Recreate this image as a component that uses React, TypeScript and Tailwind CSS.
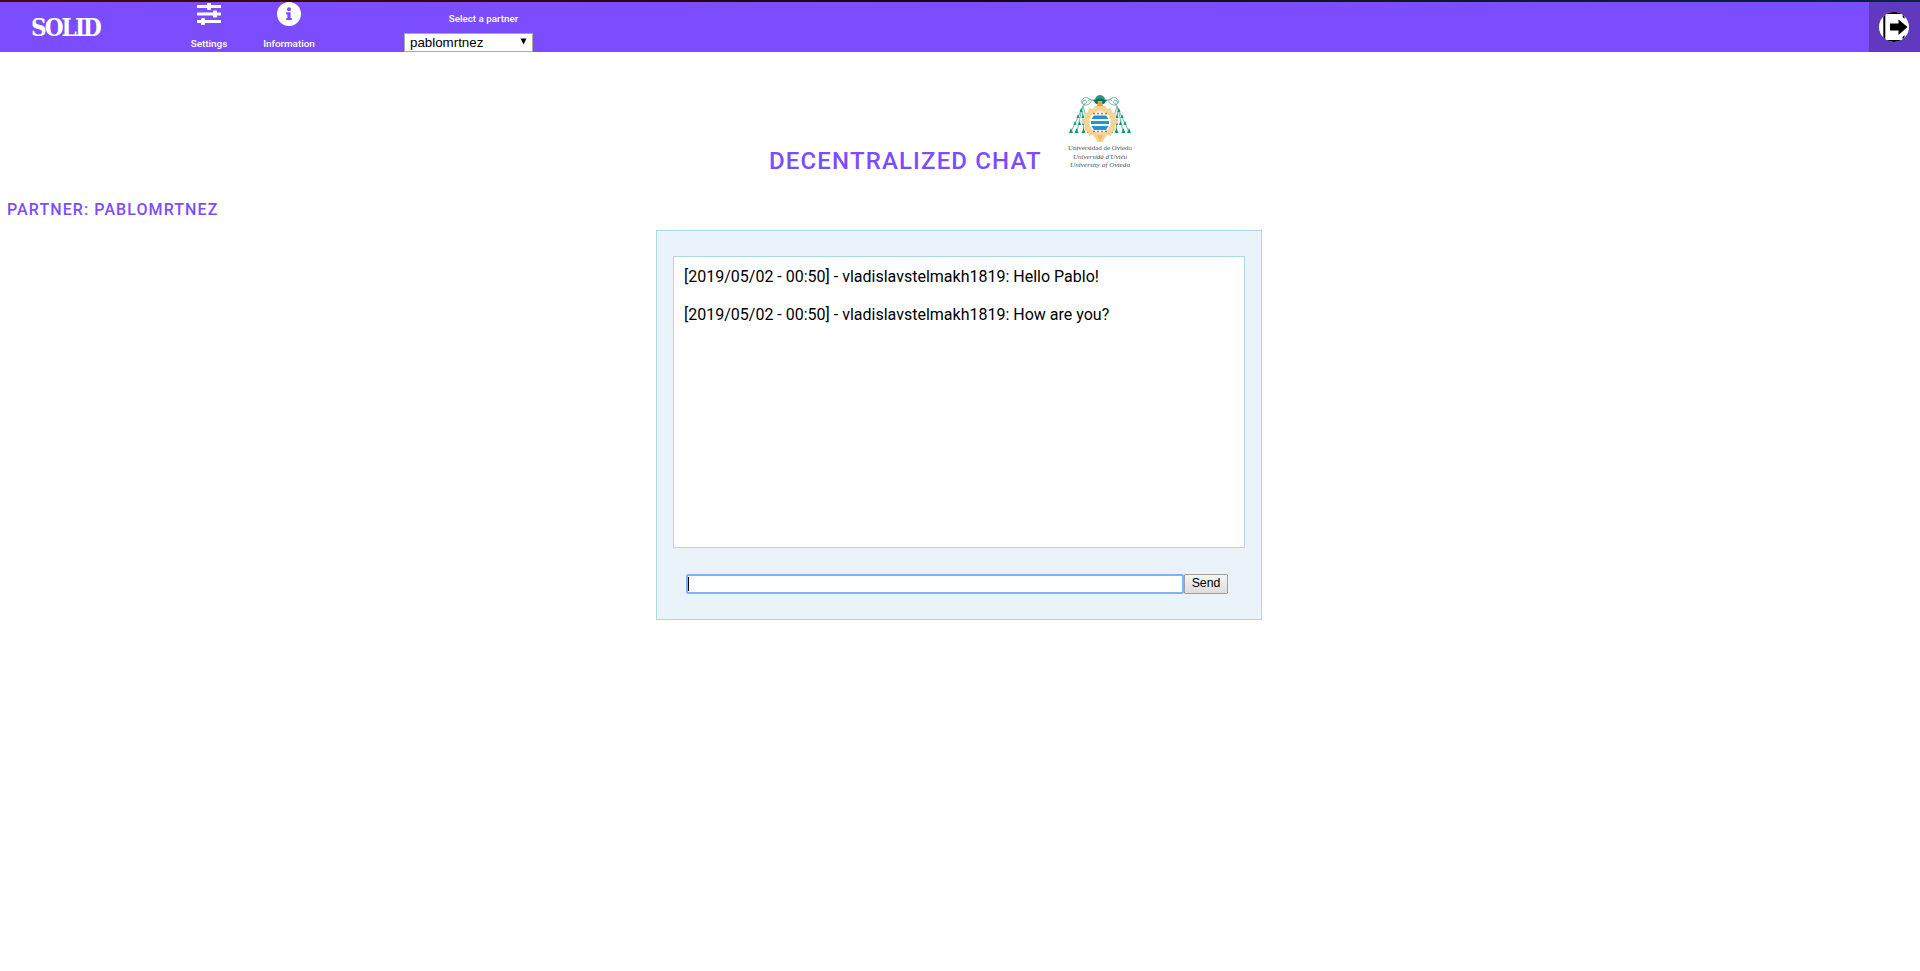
import React from 'react';

const messages = [
  '[2019/05/02 - 00:50] - vladislavstelmakh1819: Hello Pablo!',
  '[2019/05/02 - 00:50] - vladislavstelmakh1819: How are you?',
];

function SettingsIcon() {
  return (
    <svg width="24" height="24" viewBox="0 0 24 24" fill="white" className="block">
      <path d="M0 3h24v3H0zM0 10.500h24v3H0zM0 18h24v3H0z" />
      <rect x="10" y="1" width="4" height="7" rx="1" />
      <rect x="16" y="8.500" width="4" height="7" rx="1" />
      <rect x="4" y="16" width="4" height="7" rx="1" />
    </svg>
  );
}

function InfoIcon() {
  return (
    <svg width="24" height="24" viewBox="0 0 24 24" className="block">
      <circle cx="12" cy="12" r="12" fill="white" />
      <circle cx="12" cy="7.300" r="2" fill="#7c4dff" />
      <path d="M9.200 10.300h4.400v5.600h1.200v2.200H9.200v-2.200h1.200v-3.400H9.200z" fill="#7c4dff" />
    </svg>
  );
}

function LogoutIcon() {
  return (
    <svg width="30" height="30" viewBox="0 0 30 30" className="block">
      <defs>
        <clipPath id="disc"><circle cx="15" cy="15" r="15" /></clipPath>
      </defs>
      <g clipPath="url(#disc)">
        <rect width="30" height="30" fill="white" />
        <path d="M4.300 0H25.500V7L23.700 5V2H6.300V28H23.700V25L25.500 23V30H4.300z" fill="black" />
        <path d="M11 11.500h8.500V7.500L28.500 15l-9 8v-4.500H11z" fill="black" />
      </g>
    </svg>
  );
}

function Tassels() {
  return (
    <g>
      <path d="M27 5C22 6 20 1 16 3s-2 7 1 6 1-5-2-3 1 6 6 3 1-6-1-3M16 9L3 37M14 13L9 37M14 13l2 24M15 11l7 26" fill="none" stroke="#5fae9f" strokeWidth="0.900" />
      <g fill="#17947e">
        <path d="M13 13l1.500 4h-3zM10 19l1.500 4h-3zM15 19l1.500 4h-3zM7 26l1.500 4h-3zM11.500 26l1.500 4h-3zM15.500 26l1.500 4h-3zM19 26l1.500 4h-3zM3 33l2 5H1zM8.500 33l2 5h-4zM15.500 33l2 5h-4zM21 33l2 5h-4z" />
      </g>
    </g>
  );
}

function UniversityCrest() {
  return (
    <svg width="66" height="76" viewBox="0 0 66 76" className="block">
      <Tassels />
      <g transform="translate(64 0) scale(-1 1)"><Tassels /></g>
      <path d="M27 4C28 1 30 0 32 0s4 1 5 4z" fill="#2f9683" />
      <path d="M25 5q7-3 14 0l-3 4h-8z" fill="#176f64" />
      <path d="M30 6h4l1 5h-6z" fill="#d6a84c" />
      <path d="M27 11h10l2 3 4-1 1 4 4 2-1 4 3 4-3 4 1 4-4 2-1 4-4-1-3 4-1 3h-6l-1-3-3-4-4 1-1-4-4-2 1-4-3-4 3-4-1-4 4-2 1-4 4 1z" fill="#f6d397" />
      <path d="M29 40h6l-3 7z" fill="#efbf65" />
      <circle cx="32" cy="27" r="10.800" fill="#fff7e6" />
      <path d="M25 18.500h14M25 36.500h14" stroke="#dd6540" strokeWidth="1.500" strokeDasharray="2 2" />
      <path d="M26 20.500h12l2.500 3.500h-17zM23 26h18v3H23zM23.500 31h17l-2.500 4H26z" fill="#2193d6" />
      <g fill="#4f4f4f" fontFamily="'Liberation Serif', serif" fontSize="7">
        <text x="0" y="55" textLength="64" lengthAdjust="spacingAndGlyphs">Universidad de Oviedo</text>
        <g fontStyle="italic">
          <text x="5" y="64" textLength="54" lengthAdjust="spacingAndGlyphs">Universidá d&apos;Uviéu</text>
          <text x="2" y="72" textLength="60" lengthAdjust="spacingAndGlyphs">University of Oviedo</text>
        </g>
      </g>
    </svg>
  );
}

export default function App() {
  return (
    <div className="h-[971px] w-[1920px] overflow-hidden bg-white font-['Roboto',sans-serif] text-black">
      <div className="h-[2px] bg-linear-to-r from-[#420b05] via-[#150510] to-[#052442]" />
      <header className="flex h-[50px] bg-[#7c4dff] text-white">
        <div className="w-[176px] pt-[10px] pl-[31px] font-['DejaVu_Serif_Condensed','DejaVu_Serif',serif] text-[24px] leading-[32px] font-bold tracking-[-1.900px]">
          SOLID
        </div>
        <nav className="flex text-[9.900px] leading-[12px] font-medium">
          <a className="flex w-[66px] flex-col items-center">
            <SettingsIcon />
            <span className="mt-[12px]">Settings</span>
          </a>
          <a className="flex w-[94px] flex-col items-center">
            <InfoIcon />
            <span className="mt-[12px]">Information</span>
          </a>
        </nav>
        <div className="ml-[68px] flex w-[129px] flex-col">
          <label className="h-[31px] pt-[11px] pl-[30px] text-center text-[9.800px] leading-[12px] font-medium">Select a partner</label>
          <button className="flex h-[19px] items-center justify-between border border-[#a9a9a9] bg-white pr-[5px] pl-[5px] font-['Liberation_Sans',sans-serif] text-[13.333px] leading-[17px] text-black">
            <span>pablomrtnez</span>
            <svg width="7" height="7" viewBox="0 0 7 7" className="mb-[2px]"><path d="M.5.500h6L3.500 6.500z" /></svg>
          </button>
        </div>
        <a className="ml-auto flex w-[51px] items-center justify-center bg-[#6039bf] pr-[2px]">
          <LogoutIcon />
        </a>
      </header>

      <main>
        <div className="flex h-[119px] pl-[769px] text-[#7c4dff]">
          <h1 className="w-[299px] pt-[93px] text-[24px] leading-[32px] font-medium tracking-[1.150px]">DECENTRALIZED CHAT</h1>
          <div className="pt-[43px]"><UniversityCrest /></div>
        </div>
        <h2 className="h-[59px] pt-[27px] pl-[7px] text-[16px] leading-[24px] font-medium tracking-[1.080px] text-[#7c4dff]">PARTNER: PABLOMRTNEZ</h2>
        <section className="ml-[656px] h-[390px] w-[606px] border border-[#add8e6] bg-[#ebf3fa] px-[16px] pt-[25px]">
          <div className="flex h-[292px] w-[572px] flex-col gap-[14px] border border-[#add8e6] bg-white px-[10px] pt-[8px] text-[16px] leading-[24px]">
            {messages.map((message) => <p key={message}>{message}</p>)}
          </div>
          <form className="mt-[26px] ml-[13px] flex h-[20px]">
            <div className="w-[498px] rounded-[2px] border-2 border-[#7fb2f9] bg-white py-px">
              <div className="h-full w-px bg-black" />
            </div>
            <button type="button" className="flex w-[44px] justify-center rounded-[1px] border border-[#a0a0a0] bg-linear-to-b from-[#f6f6f6] to-[#dddddd] font-['Liberation_Sans',sans-serif] text-[12.300px] leading-[17px]">
              Send
            </button>
          </form>
        </section>
      </main>
    </div>
  );
}
